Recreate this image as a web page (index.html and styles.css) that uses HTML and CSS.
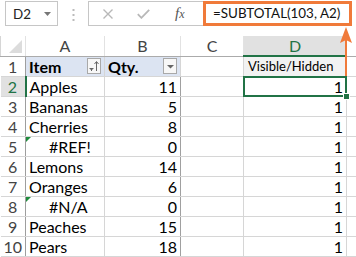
FILE: index.html
```html
<html>

<head>
    <link rel="stylesheet" href="styles.css">
</head>

<body>
    <div class="toolbar">
        <div class="namebox">
            <span>D2</span>
            <svg width="7" height="4" viewBox="0 0 7 4"><path d="M0 0h7L3.5 4z" fill="#777"/></svg>
        </div>
        <div class="grip">
            <svg width="3" height="12" viewBox="0 0 3 12"><rect x="0.5" y="0" width="2" height="2" fill="#bbb"/><rect x="0.5" y="5" width="2" height="2" fill="#bbb"/><rect x="0.5" y="10" width="2" height="2" fill="#bbb"/></svg>
        </div>
        <div class="fbuttons">
            <svg class="cancel" width="10" height="10" viewBox="0 0 10 10"><path d="M0.5 0.5l9 9M9.5 0.5l-9 9" stroke="#b8b8b8" stroke-width="1.4" fill="none"/></svg>
            <svg class="enter" width="13" height="10" viewBox="0 0 13 10"><path d="M0.8 5.2l3.6 3.6 7.8-8" stroke="#b8b8b8" stroke-width="1.8" fill="none"/></svg>
            <span class="fx">f<span class="fxsub">x</span></span>
        </div>
        <div class="formula">=SUBTOTAL(103, A2)</div>
    </div>

    <table class="sheet">
        <colgroup>
            <col class="c-rh">
            <col class="c-a">
            <col class="c-b">
            <col class="c-c">
            <col class="c-d">
            <col class="c-e">
        </colgroup>
        <tr class="colhead">
            <th class="corner"><svg width="13" height="13" viewBox="0 0 13 13"><path d="M13 0v13H0z" fill="#dcdcdc"/></svg></th>
            <th>A</th>
            <th>B</th>
            <th>C</th>
            <th class="sel">D</th>
            <th></th>
        </tr>
        <tr>
            <th class="rh">1</th>
            <td class="thead">
                <div class="hcell"><b>Item</b>
                    <span class="fbtn"><svg width="12" height="14" viewBox="0 0 12 14"><path d="M1.5 9.5h4M2.5 10.5h2M3 11.5h1" stroke="#666" stroke-width="1"/><path d="M8.5 12V3" stroke="#666" stroke-width="1"/><path d="M6.5 5L8.5 2.5 10.5 5" stroke="#666" stroke-width="1" fill="none"/></svg></span>
                </div>
            </td>
            <td class="thead">
                <div class="hcell"><b>Qty.</b>
                    <span class="fbtn"><svg width="12" height="14" viewBox="0 0 12 14"><path d="M3 6h7L6.5 9.5z" fill="#666"/></svg></span>
                </div>
            </td>
            <td></td>
            <td class="label">Visible/Hidden</td>
            <td></td>
        </tr>
        <tr>
            <th class="rh cur">2</th>
            <td>Apples</td>
            <td class="num edge">11</td>
            <td></td>
            <td class="num active">1</td>
            <td></td>
        </tr>
        <tr>
            <th class="rh">3</th>
            <td>Bananas</td>
            <td class="num edge">5</td>
            <td></td>
            <td class="num">1</td>
            <td></td>
        </tr>
        <tr>
            <th class="rh">4</th>
            <td>Cherries</td>
            <td class="num edge">8</td>
            <td></td>
            <td class="num">1</td>
            <td></td>
        </tr>
        <tr>
            <th class="rh">5</th>
            <td class="err">#REF!</td>
            <td class="num edge">0</td>
            <td></td>
            <td class="num">1</td>
            <td></td>
        </tr>
        <tr>
            <th class="rh">6</th>
            <td>Lemons</td>
            <td class="num edge">14</td>
            <td></td>
            <td class="num">1</td>
            <td></td>
        </tr>
        <tr>
            <th class="rh">7</th>
            <td>Oranges</td>
            <td class="num edge">6</td>
            <td></td>
            <td class="num">1</td>
            <td></td>
        </tr>
        <tr>
            <th class="rh">8</th>
            <td class="err">#N/A</td>
            <td class="num edge">0</td>
            <td></td>
            <td class="num">1</td>
            <td></td>
        </tr>
        <tr>
            <th class="rh">9</th>
            <td>Peaches</td>
            <td class="num edge">15</td>
            <td></td>
            <td class="num">1</td>
            <td></td>
        </tr>
        <tr>
            <th class="rh">10</th>
            <td>Pears</td>
            <td class="num edge">18</td>
            <td></td>
            <td class="num">1</td>
            <td></td>
        </tr>
    </table>

    <svg class="arrow" width="16" height="52" viewBox="0 0 16 52">
        <path d="M8 12V50" stroke="#f07a3a" stroke-width="2"/>
        <path d="M8 1L14 17 8 14 2 17z" fill="#f07a3a"/>
    </svg>
</body>

</html>
```

FILE: styles.css
```css
body {
    margin: 0;
    width: 356px;
    height: 257px;
    overflow: hidden;
    position: relative;
    background-color: #fff;
    font-family: Lato, "Liberation Sans", sans-serif;
    font-size: 13.4px;
    color: #000;
}

.toolbar {
    display: flex;
    align-items: flex-start;
    height: 36px;
    padding-top: 1px;
    box-sizing: border-box;
}

.namebox {
    margin-left: 5px;
    width: 53px;
    height: 25px;
    box-sizing: border-box;
    border: 1px solid #c6c6c6;
    display: flex;
    align-items: center;
    justify-content: space-between;
    padding: 0 6px 0 7px;
    color: #222;
}

.grip {
    width: 30px;
    display: flex;
    justify-content: center;
    padding-top: 8px;
}

.fbuttons {
    width: 115px;
    height: 25px;
    box-sizing: border-box;
    border: 1px solid #c6c6c6;
    border-right: 0;
    display: flex;
    align-items: center;
}

.cancel {
    margin-left: 14px;
}

.enter {
    margin-left: 24px;
}

.fx {
    margin-left: 25px;
    font-family: "Liberation Serif", serif;
    font-style: italic;
    font-size: 15px;
    color: #555;
}

.fxsub {
    font-size: 12px;
}

.formula {
    width: 149px;
    height: 25px;
    box-sizing: border-box;
    border: 3px solid #f07a3a;
    padding-left: 7px;
    line-height: 19px;
    color: #111;
}

.sheet {
    border-collapse: collapse;
    table-layout: fixed;
    width: 356px;
}

.c-rh { width: 25px; }
.c-a { width: 79px; }
.c-b { width: 76px; }
.c-c { width: 63px; }
.c-d { width: 103px; }
.c-e { width: 10px; }

.sheet th,
.sheet td {
    padding: 0 3px;
    height: 19px;
    line-height: 19px;
    border: 1px solid #d6d6d6;
    white-space: nowrap;
    overflow: hidden;
}

.sheet th {
    font-weight: normal;
    color: #444;
    text-align: center;
}

.colhead th {
    height: 20px;
    border-top: 0;
    border-right-color: #e2e2e2;
    border-bottom-color: #ababab;
}

.colhead th.sel {
    background-color: #e1e1e1;
    color: #217346;
    border-bottom: 2px solid #217346;
}

.corner {
    text-align: right !important;
    vertical-align: bottom;
}

.corner svg {
    display: block;
    margin: 0 0 3px auto;
}

.rh {
    border-left: 0 !important;
    border-right-color: #9e9e9e !important;
    padding: 0 !important;
}

.rh.cur {
    background-color: #e1e1e1;
    color: #217346;
    border-right: 2px solid #217346 !important;
}

.thead {
    background-color: #dce4f2;
}

.hcell {
    display: flex;
    align-items: center;
    justify-content: space-between;
}

.fbtn {
    display: flex;
    width: 14px;
    height: 16px;
    box-sizing: border-box;
    border: 1px solid #a9a9a9;
    background-color: #f7f7f7;
    align-items: center;
    justify-content: center;
}

.label {
    background-color: #f2f2f2;
    padding: 0 0 0 4px !important;
    font-size: 13px;
}

.num {
    text-align: right;
}

.edge {
    border-right-color: #a0a0a0 !important;
}

.err {
    position: relative;
    padding-left: 23px !important;
}

.err::before {
    content: "";
    position: absolute;
    left: 0;
    top: 0;
    border-top: 5px solid #1e8c3c;
    border-right: 5px solid transparent;
}

.active {
    position: relative;
    overflow: visible !important;
}

.active::after {
    content: "";
    position: absolute;
    left: -1px;
    top: -1px;
    right: -1px;
    bottom: -1px;
    border: 2px solid #217346;
}

.active::before {
    content: "";
    position: absolute;
    right: -4px;
    bottom: -4px;
    width: 5px;
    height: 5px;
    background-color: #217346;
    border: 1px solid #fff;
    z-index: 1;
}

.arrow {
    position: absolute;
    left: 338px;
    top: 26px;
}
```
